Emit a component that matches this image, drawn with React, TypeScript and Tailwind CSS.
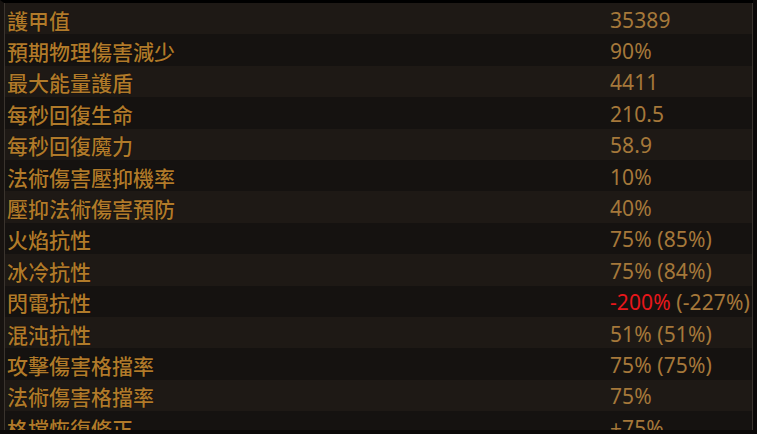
import React from "react";

type Row = { label: string; value: React.ReactNode };

const rows: Row[] = [
  { label: "護甲值", value: "35389" },
  { label: "預期物理傷害減少", value: "90%" },
  { label: "最大能量護盾", value: "4411" },
  { label: "每秒回復生命", value: "210.5" },
  { label: "每秒回復魔力", value: "58.9" },
  { label: "法術傷害壓抑機率", value: "10%" },
  { label: "壓抑法術傷害預防", value: "40%" },
  { label: "火焰抗性", value: "75% (85%)" },
  { label: "冰冷抗性", value: "75% (84%)" },
  {
    label: "閃電抗性",
    value: (
      <>
        <span className="text-[#e8171b]">-200%</span> (-227%)
      </>
    ),
  },
  { label: "混沌抗性", value: "51% (51%)" },
  { label: "攻擊傷害格擋率", value: "75% (75%)" },
  { label: "法術傷害格擋率", value: "75%" },
  { label: "格擋恢復修正", value: "+75%" },
];

export default function App() {
  return (
    <div className="w-[757px] h-[434px] bg-[#0b0908] overflow-hidden">
      <div className="h-[430px] border-t-[3px] border-t-black border-l-[4px] border-l-[#171310] mr-[4px] overflow-hidden">
        <div className="h-full border-l border-r border-[#3a342e] overflow-hidden">
          {rows.map((r, i) => (
            <div
              key={i}
              className={`h-[31.4px] pt-[3px] flex items-center whitespace-nowrap ${
                i % 2 === 0 ? "bg-[#1e1915]" : "bg-[#151210]"
              }`}
            >
              <div
                className="w-[605px] pl-[2px] text-[21px] font-medium leading-none text-[#b07a2a] [text-shadow:0_0_1px_#000]"
                style={{ fontFamily: '"Noto Sans CJK TC", "Noto Sans", sans-serif' }}
              >
                {r.label}
              </div>
              <div
                className="text-[21px] leading-none text-[#a5783a] tracking-[0.1px]"
                style={{ fontFamily: '"Noto Sans", "Noto Sans CJK TC", sans-serif' }}
              >
                {r.value}
              </div>
            </div>
          ))}
        </div>
      </div>
    </div>
  );
}
